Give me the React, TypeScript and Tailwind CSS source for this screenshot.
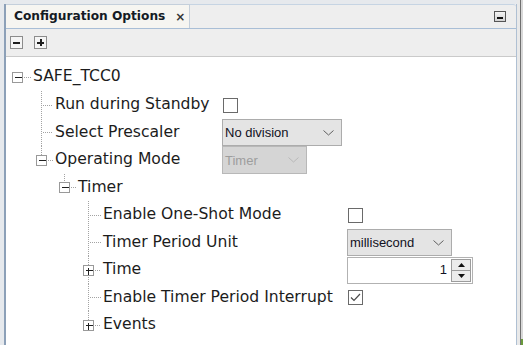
import React from 'react';

type Kind = 'root' | 'leaf' | 'branch';

interface RowProps {
  h: number;
  level: number;
  label: string;
  kind: Kind;
  last?: boolean;
  plus?: boolean;
  hasKids?: boolean;
  labelW: string;
  control?: React.ReactNode;
}

// x centres of the tree handles per level, and where the label starts
const centers = [11, 35, 58, 82];
const textX = [27, 49, 72, 97];
const DOT = '#a3a3a3';

const TreeGuides: React.FC<{ h: number; level: number; kind: Kind; last?: boolean; plus?: boolean; hasKids?: boolean }> = ({
  h,
  level,
  kind,
  last,
  plus,
  hasKids,
}) => {
  const c = centers[level] + 0.5;
  const mid = Math.floor(h / 2) + 0.5;
  const w = textX[level];
  const child = level < 3 ? centers[level + 1] + 0.5 : 0;

  return (
    <svg width={w} height={h} className="shrink-0" shapeRendering="crispEdges">
      <g stroke={DOT} strokeWidth={1} strokeDasharray="1 1" fill="none">
        {level > 0 && kind === 'leaf' && <line x1={c} y1={0} x2={c} y2={last ? mid : h} />}
        {level > 0 && kind !== 'leaf' && <line x1={c} y1={0} x2={c} y2={mid - 5} />}
        {level > 0 && kind !== 'leaf' && !last && <line x1={c} y1={mid + 6} x2={c} y2={h} />}
        <line x1={kind === 'leaf' ? c + 1 : c + 6} y1={mid} x2={w - 2} y2={mid} />
        {hasKids && <line x1={child} y1={h - 4} x2={child} y2={h} />}
      </g>
      {kind !== 'leaf' && (
        <g>
          <rect x={c - 5} y={mid - 5} width={10} height={10} fill="#ffffff" stroke="#999999" />
          <line x1={c - 3} y1={mid} x2={c + 4} y2={mid} stroke="#202020" />
          {plus && <line x1={c} y1={mid - 3} x2={c} y2={mid + 4} stroke="#202020" />}
        </g>
      )}
    </svg>
  );
};

const Checkbox: React.FC<{ checked?: boolean }> = ({ checked }) => (
  <div className="w-[15px] h-[15px] border border-[#6a6a6a] bg-white flex items-center justify-center">
    {checked && (
      <svg width="11" height="9" viewBox="0 0 11 9">
        <polyline points="1,4.5 4,7.5 10,1" fill="none" stroke="#4a4a4a" strokeWidth="1.2" />
      </svg>
    )}
  </div>
);

const Chevron: React.FC<{ color: string }> = ({ color }) => (
  <svg width="11" height="6" viewBox="0 0 11 6">
    <polyline points="0.5,0.5 5.5,5 10.5,0.5" fill="none" stroke={color} strokeWidth="1" />
  </svg>
);

const Select: React.FC<{ value: string; width: string; disabled?: boolean }> = ({ value, width, disabled }) => (
  <div
    className={`${width} h-full flex items-center justify-between border pl-[2px] pr-[7px] font-['Liberation_Sans',sans-serif] text-[13px] leading-none ${
      disabled ? 'bg-[#d5d5d5] border-[#b8b8b8] text-[#9d9d9d]' : 'bg-[#e4e4e4] border-[#acacac] text-[#111122]'
    }`}
  >
    <span>{value}</span>
    <Chevron color={disabled ? '#b8b8b8' : '#606060'} />
  </div>
);

const Spinner: React.FC<{ value: string }> = ({ value }) => (
  <div className="w-[126px] h-[27px] flex border border-[#b2b2b2] bg-white">
    <div className="flex-1 flex items-center justify-end pr-[4px] font-['Liberation_Sans',sans-serif] text-[13px] text-[#111122]">
      {value}
    </div>
    <div className="w-[21px] flex flex-col py-[1px] pr-[1px]">
      <div className="flex-1 flex items-center justify-center border border-[#9c9c9c] bg-[#ececec]">
        <svg width="7" height="4" viewBox="0 0 7 4">
          <polygon points="0,4 7,4 3.5,0" fill="#111" />
        </svg>
      </div>
      <div className="flex-1 flex items-center justify-center border border-t-0 border-[#9c9c9c] bg-[#ececec]">
        <svg width="7" height="4" viewBox="0 0 7 4">
          <polygon points="0,0 7,0 3.5,4" fill="#111" />
        </svg>
      </div>
    </div>
  </div>
);

const TreeRow: React.FC<RowProps> = ({ h, level, label, kind, last, plus, hasKids, labelW, control }) => (
  <div className="flex items-center" style={{ height: h }}>
    <div className={`${labelW} shrink-0 flex items-center h-full`}>
      <TreeGuides h={h} level={level} kind={kind} last={last} plus={plus} hasKids={hasKids} />
      <span className="font-['DejaVu_Sans',sans-serif] text-[15.6px] leading-none text-[#1c1c1c] whitespace-nowrap">
        {label}
      </span>
    </div>
    {control}
  </div>
);

const ToolButton: React.FC<{ plus?: boolean }> = ({ plus }) => (
  <div className="w-[13px] h-[13px] border border-[#8c8c8c] bg-[#f5f5f5] flex items-center justify-center relative">
    <div className="w-[7px] h-[2px] bg-[#1e1e1e]" />
    {plus && <div className="absolute w-[2px] h-[7px] bg-[#1e1e1e]" />}
  </div>
);

export default function App() {
  return (
    <div className="w-[523px] h-[345px] flex overflow-hidden bg-[#e6e9ed]">
      <div className="w-[4px] shrink-0" />
      <div className="w-[513px] shrink-0 mt-[4px] flex flex-col border-l-2 border-l-[#8ca0b8] border-r border-r-[#afc0d3] bg-[#eeeeee]">
        {/* tab strip */}
        <div className="flex h-[25px] border-b border-[#a9bed6]">
          <div className="w-[184px] flex items-center pl-[8px] bg-[#f6f5f1] border-t border-r border-[#c4cfdb]">
            <span className="font-['DejaVu_Sans',sans-serif] font-bold text-[12.2px] text-[#141a24] whitespace-nowrap">
              Configuration Options
            </span>
            <span className="ml-[10px] font-['DejaVu_Sans',sans-serif] font-bold text-[12px] text-[#333]">×</span>
          </div>
          <div className="flex-1 flex items-center justify-end pr-[10px] border-t border-[#c6d4e3] rounded-tr-[3px]">
            <div className="w-[12px] h-[11px] border border-[#555] bg-gradient-to-b from-[#f4f4f4] to-[#d2d2d2] flex items-end justify-center pb-[2px]">
              <div className="w-[6px] h-[2px] bg-[#111]" />
            </div>
          </div>
        </div>

        {/* toolbar */}
        <div className="h-[28px] flex items-center gap-[11px] pl-[4px] border-b border-[#cacaca]">
          <ToolButton />
          <ToolButton plus />
        </div>

        {/* tree */}
        <div className="flex-1 bg-white pt-[6px]">
          <TreeRow h={28} level={0} label="SAFE_TCC0" kind="root" hasKids labelW="w-[216px]" />
          <TreeRow
            h={28}
            level={1}
            label="Run during Standby"
            kind="leaf"
            labelW="w-[217px]"
            control={<Checkbox />}
          />
          <TreeRow
            h={27}
            level={1}
            label="Select Prescaler"
            kind="leaf"
            labelW="w-[216px]"
            control={<Select value="No division" width="w-[120px]" />}
          />
          <TreeRow
            h={28}
            level={1}
            label="Operating Mode"
            kind="branch"
            last
            hasKids
            labelW="w-[216px]"
            control={<Select value="Timer" width="w-[85px]" disabled />}
          />
          <TreeRow h={27} level={2} label="Timer" kind="branch" last hasKids labelW="w-[216px]" />
          <TreeRow
            h={28}
            level={3}
            label="Enable One-Shot Mode"
            kind="leaf"
            labelW="w-[342px]"
            control={<Checkbox />}
          />
          <TreeRow
            h={27}
            level={3}
            label="Timer Period Unit"
            kind="leaf"
            labelW="w-[341px]"
            control={<Select value="millisecond" width="w-[105px]" />}
          />
          <TreeRow
            h={28}
            level={3}
            label="Time"
            kind="branch"
            plus
            labelW="w-[341px]"
            control={<Spinner value="1" />}
          />
          <TreeRow
            h={27}
            level={3}
            label="Enable Timer Period Interrupt"
            kind="leaf"
            labelW="w-[342px]"
            control={<Checkbox checked />}
          />
          <TreeRow h={28} level={3} label="Events" kind="branch" plus last labelW="w-[341px]" />
        </div>
      </div>
      <div className="w-[3px] shrink-0 bg-[#e9e9e9]" />
      <div className="w-[1px] shrink-0 bg-[#6f6f6f]" />
      <div className="flex-1 flex flex-col bg-[#d8d8d8]">
        <div className="flex-1" />
        <div className="h-[6px] bg-[#6a9a3c]" />
      </div>
    </div>
  );
}
